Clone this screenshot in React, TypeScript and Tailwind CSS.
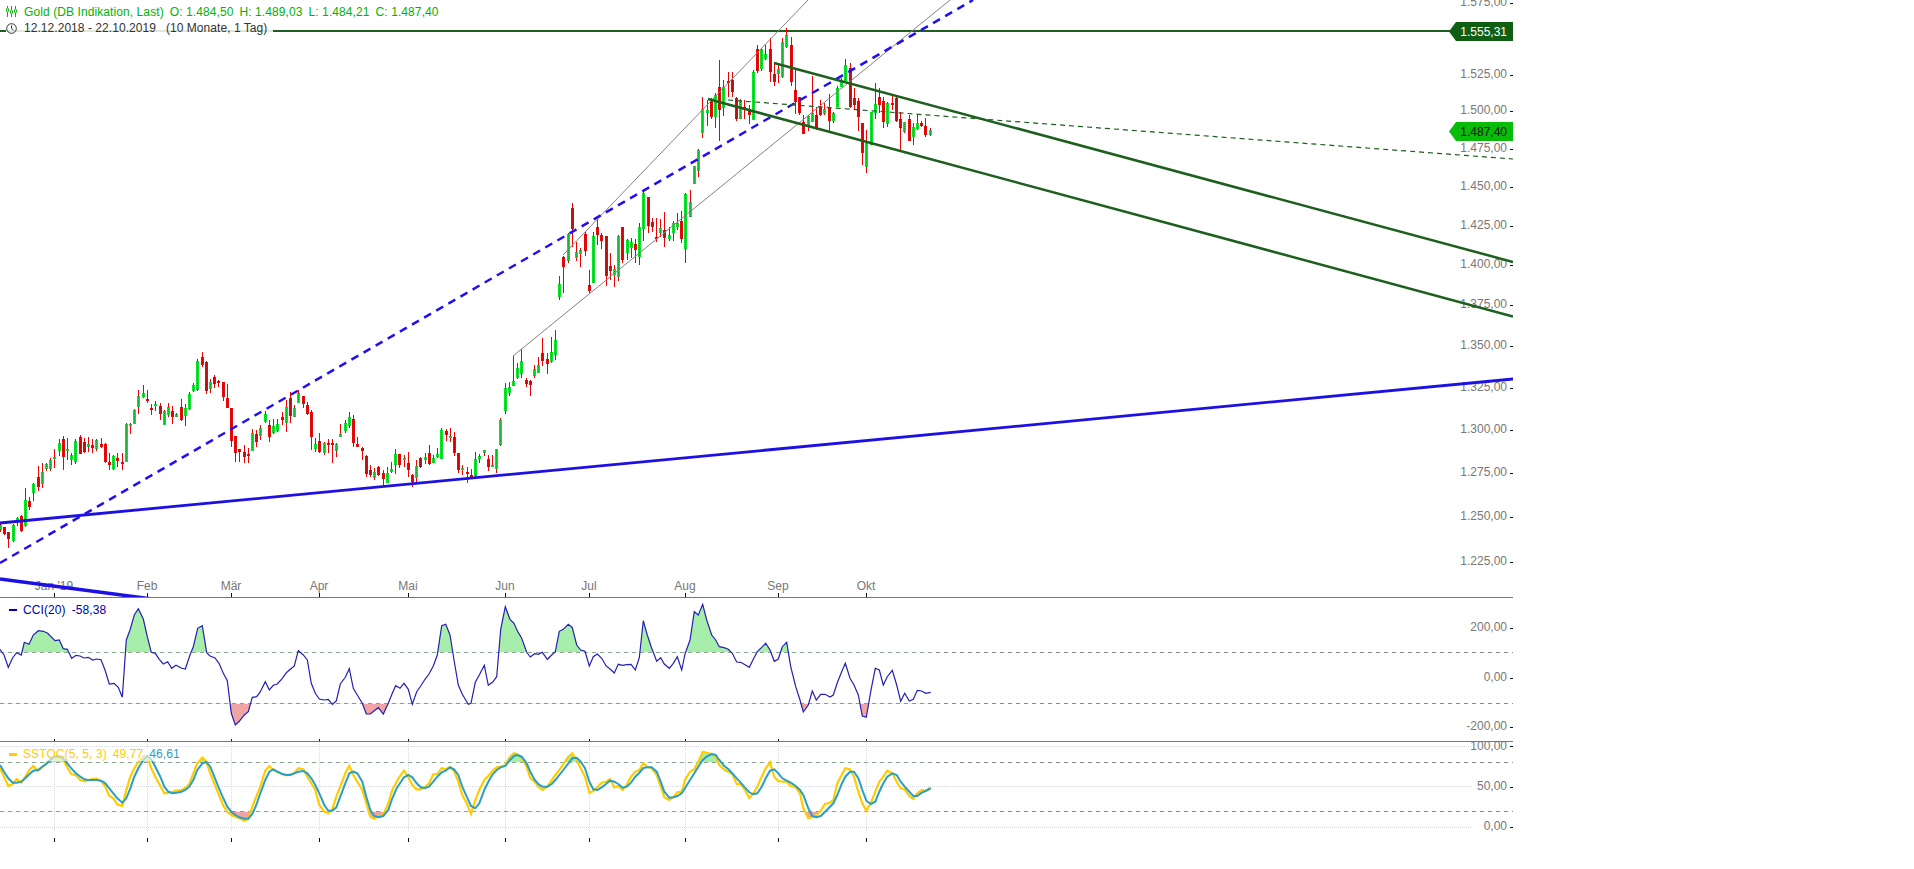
type Pt = number[];
// [x, wickTop, wickBottom, bodyTop, bodyBottom, green]
type Candle = [number, number, number, number, number, number];

const AXIS_END = 1513;

const candlesA: Candle[] = [
  [1,545,575,555,570,1],[13,560,585,562,582,0],[25,575,623,577,597,0],[38,553,606,556,603,1],[50,532,558,535,545,1],
  [64,525,575,527,572,0],[76,445,560,481,558,1],[88,470,510,484,502,0],[100,430,483,432,458,1],[114,378,452,412,442,0],
  [127,370,445,397,431,1],[139,368,392,371,388,1],[151,355,392,361,386,1],[163,328,385,351,356,1],[177,297,348,310,332,1],
  [190,288,390,298,350,0],[202,295,360,327,329,1],[214,338,375,346,359,1],[226,298,372,304,365,1],[241,285,343,292,341,0],
  [253,293,338,307,335,0],[265,292,335,313,320,1],[277,297,338,316,325,0],[289,297,332,301,326,1],[304,293,325,312,320,0],
  [316,310,370,312,367,0],[328,338,390,366,374,0],[340,345,390,349,388,1],[352,338,380,355,362,0],[367,340,390,366,368,0],
  [379,250,367,252,365,1],[391,250,282,252,257,1],[403,207,252,210,252,1],[415,150,222,169,200,1],[430,135,175,160,172,1],
  [442,150,188,177,179,0],[454,193,225,205,209,0],[466,183,212,192,197,1],[481,188,240,198,221,0],[493,210,255,213,254,1],
  [505,190,232,202,225,1],[517,198,252,213,230,0],[529,220,232,221,230,1],[544,178,243,202,240,0],[556,192,258,205,227,1],
  [568,155,210,163,207,1],[580,130,155,136,152,1],[592,58,152,64,150,1],[607,36,80,52,76,0],[619,63,162,66,152,0],
  [631,118,158,127,147,1],[643,105,143,112,131,0],[655,120,140,124,126,0],[670,125,183,127,171,0],[682,132,205,175,203,0],
  [694,203,322,203,303,0],[706,288,365,289,338,0],[718,328,365,328,335,0],[733,315,368,337,350,0],[745,325,368,343,347,0],
  [757,268,333,280,332,1],[769,270,320,283,305,0],[781,255,300,265,287,1],[796,212,250,223,245,1],[808,240,305,255,290,0],
  [820,237,282,259,280,1],[832,237,275,253,272,1],[847,215,255,232,240,0],[859,180,275,202,248,1],[871,155,250,174,228,0],
  [883,195,232,205,230,1],[895,150,190,160,190,1],[910,168,205,169,192,0],[922,185,225,196,221,0],[934,210,330,216,290,0],
  [946,295,335,313,328,1],[958,280,338,304,336,0],[973,305,345,310,339,1],[985,298,340,309,316,0],[997,298,368,309,311,0],
  [1009,310,350,313,334,1],[1021,252,290,283,290,1],[1036,240,280,250,274,1],[1048,215,265,230,258,1],
];

const candlesB: Candle[] = [
  [10,225,322,238,310,0],[22,292,322,313,320,0],[37,320,360,324,332,0],[49,345,410,347,401,0],[61,375,410,391,404,0],
  [73,385,420,395,413,1],[85,377,408,382,404,0],[100,390,440,400,416,0],[112,382,430,400,428,1],[124,365,400,388,395,1],
  [136,327,403,343,376,1],[148,342,385,343,376,0],[163,345,380,354,359,1],[175,335,410,370,391,0],[187,402,442,404,425,0],
  [199,360,430,379,415,1],[211,352,385,355,382,0],[226,340,372,352,360,1],[238,316,375,340,371,0],[250,345,370,355,368,1],
  [262,323,355,343,352,1],[274,265,358,270,356,1],[289,268,303,272,286,0],[301,265,305,288,292,1],[313,275,348,291,340,0],
  [325,338,398,340,389,0],[337,375,405,385,391,1],[352,380,428,397,403,0],[364,388,415,405,411,0],[376,337,410,358,408,1],
  [388,343,368,348,356,1],[403,330,348,331,339,1],[415,345,392,358,380,0],[427,345,378,376,378,1],[439,327,398,328,386,1],
  [451,235,317,240,316,1],[466,128,222,145,213,1],[478,125,167,142,159,1],[490,48,137,124,137,1],[502,68,118,83,113,1],
  [514,28,115,64,103,1],[529,115,140,120,131,0],[541,120,167,123,134,0],[553,75,115,87,107,1],[565,50,100,76,98,1],
  [577,-5,78,40,62,0],[592,40,102,57,71,0],[604,-10,70,37,65,1],[616,-30,60,0,46,1],
];

const candlesC: Candle[] = [
  [58,288,360,312,350,1],[70,228,340,232,260,0],[85,160,248,163,243,1],[97,70,200,84,148,0],[109,185,242,217,233,1],
  [121,205,262,210,222,1],[136,155,228,163,212,0],[148,270,340,316,332,0],[160,155,310,169,310,1],[172,118,195,142,166,0],
  [184,160,208,165,182,0],[199,168,318,169,288,0],[211,220,300,259,272,0],[223,255,320,268,286,1],[235,165,303,167,290,1],
  [247,140,250,142,239,0],[262,178,240,181,218,1],[274,175,235,187,203,1],[286,178,248,193,209,0],[298,130,255,140,232,1],
  [310,35,182,40,148,1],[325,50,158,52,137,0],[337,115,155,126,140,0],[349,115,185,171,177,0],[361,118,170,145,158,1],
  [373,97,200,151,173,0],[388,140,183,166,178,1],[400,122,183,129,158,1],[412,98,150,129,140,1],[424,93,190,124,178,0],
  [436,40,250,43,208,1],[451,30,112,65,110,1],
];

const candlesD: Candle[] = [
  [133,497,553,498,552,1],[145,447,530,451,512,1],[157,290,415,328,398,1],[172,300,378,330,338,1],[184,293,358,300,350,0],
  [196,280,385,286,350,1],[208,180,422,262,330,0],[220,240,348,262,325,1],[235,217,290,243,246,0],[247,215,290,240,276,0],
  [259,292,362,295,356,0],[271,298,358,300,356,1],[283,300,358,322,328,0],[298,315,372,328,345,0],[310,210,360,217,360,1],
  [322,135,220,147,212,0],[334,145,212,148,208,1],[346,135,180,162,176,1],[361,115,245,147,215,0],[373,190,258,222,245,0],
  [385,190,248,208,221,1],[397,115,235,126,232,1],[409,85,145,104,142,1],[424,112,258,135,245,0],[436,205,342,270,306,0],
  [448,290,345,292,340,0],[460,345,402,365,401,0],[475,345,392,347,378,1],[487,228,362,340,365,1],[499,322,390,345,385,0],
  [511,300,348,320,344,0],[523,310,345,328,342,1],[538,282,395,322,362,0],[550,335,370,340,362,1],[562,258,320,263,320,1],
  [574,235,262,245,262,1],[586,178,250,196,243,1],[601,190,325,205,320,0],[613,265,328,295,315,0],[625,295,392,304,350,0],
  [637,370,495,370,460,0],[649,390,518,430,502,1],[664,335,432,337,435,1],[676,250,358,313,340,1],[688,265,340,291,314,0],
  [700,290,385,303,366,0],[712,305,380,310,373,1],[727,288,330,310,312,0],[739,290,365,293,362,0],[751,335,450,356,385,0],
  [763,365,398,367,397,1],[778,345,422,358,422,0],[790,370,435,380,410,1],[802,345,390,370,388,1],[814,363,382,370,379,0],
  [826,355,412,379,406,0],[841,385,408,390,406,1],
];

const toCandles = (rows: Candle[], ox: number, oy: number): Candle[] =>
  rows.map(([x, wt, wb, bt, bb, g]) => [
    Math.round(ox + x / 3),
    Math.round(oy + wt / 3),
    Math.round(oy + wb / 3),
    Math.round(oy + bt / 3),
    Math.round(oy + bb / 3),
    g,
  ]);

const candles = [
  ...toCandles(candlesA, 0, 340),
  ...toCandles(candlesB, 350, 340),
  ...toCandles(candlesC, 540, 180),
  ...toCandles(candlesD, 650, 0),
];

const cciA: Pt[] = [[0,268],[12,285],[25,322],[38,293],[50,278],[64,285],[73,247],[87,253],[100,225],[115,212],[130,214],[143,220],[165,242],[178,240],[190,266],[202,268],[215,295],[228,286],[240,288],[252,294],[265,292],[278,300],[290,297],[303,299],[315,330],[328,372],[342,370],[355,382],[367,412],[379,240],[390,210],[403,165],[415,146],[430,177],[442,230],[454,277],[466,280],[478,298],[490,312],[503,305],[515,325],[528,316],[545,325],[556,327],[570,285],[580,260],[593,205],[607,197],[620,278],[630,288],[645,294],[657,310],[670,340],[682,362],[694,460],[706,495],[718,484],[733,465],[745,455],[757,412],[770,410],[781,395],[796,365],[808,390],[820,376],[832,372],[847,355],[859,338],[871,328],[883,318],[895,272],[910,285],[922,300],[934,370],[946,400],[958,417],[973,420],[985,418],[997,433],[1009,423],[1021,372],[1036,352],[1048,326],[1060,385],[1072,405],[1087,430],[1099,462],[1111,462],[1123,452],[1135,443],[1150,462],[1165,430],[1177,400],[1187,377],[1200,385]];
const cciB: Pt[] = [[0,382],[12,370],[25,388],[37,433],[50,395],[62,378],[75,358],[87,342],[100,318],[112,285],[125,197],[137,193],[150,225],[162,300],[175,375],[187,403],[205,433],[213,430],[226,367],[238,345],[253,316],[265,376],[278,366],[290,350],[302,208],[316,140],[330,178],[342,190],[352,212],[365,235],[380,277],[391,291],[404,281],[415,283],[427,277],[442,298],[455,285],[466,275],[478,214],[490,208],[505,193],[517,203],[530,255],[542,270],[555,274],[568,318],[580,290],[592,282],[605,295],[618,317],[630,327],[643,339],[655,313],[668,316],[680,314],[693,313],[706,330],[718,293],[730,182],[742,225],[755,265],[770,304],[782,293],[793,312],[808,325],[820,310],[832,290],[845,330],[855,282],[870,240],[883,155],[895,165],[908,133],[920,180],[935,225],[947,240],[958,260],[972,263],[985,268],[997,280],[1010,306],[1022,307],[1035,314],[1048,322],[1060,298],[1072,275],[1085,262],[1097,250],[1110,270],[1123,304],[1135,297],[1147,260],[1160,247],[1172,320],[1187,380],[1200,420]];
const cciC: Pt[] = [[0,420],[10,456],[25,435],[37,393],[49,420],[62,403],[75,403],[90,411],[100,405],[112,368],[125,335],[136,310],[150,355],[162,375],[175,405],[187,468],[199,472],[212,395],[226,325],[238,330],[250,375],[262,350],[277,331],[290,375],[302,424],[314,400],[328,423],[340,418],[352,391],[365,393],[377,400],[392,397]];

const yelA: Pt[] = [[0,625],[12,650],[25,678],[38,672],[50,657],[64,668],[76,650],[88,630],[100,618],[114,632],[127,622],[139,610],[151,600],[163,592],[177,592],[190,600],[202,622],[214,642],[226,645],[241,660],[253,664],[265,660],[277,657],[289,656],[304,664],[316,680],[328,707],[340,715],[352,733],[367,738],[379,690],[391,650],[403,625],[415,606],[430,588],[442,590],[454,625],[466,650],[481,678],[493,700],[505,698],[517,695],[529,692],[544,690],[556,684],[568,672],[580,640],[592,610],[607,593],[619,605],[631,640],[643,670],[655,700],[670,737],[682,755],[694,765],[706,770],[718,775],[733,782],[745,776],[757,740],[769,710],[781,680],[796,632],[808,618],[820,630],[832,635],[847,642],[859,646],[871,643],[883,640],[895,625],[910,628],[922,650],[934,670],[946,690],[958,735],[973,755],[985,760],[997,748],[1009,710],[1021,680],[1036,640],[1048,617],[1060,645],[1072,665],[1087,690],[1099,730],[1111,770],[1123,776],[1135,768],[1150,765],[1165,730],[1177,690],[1190,665],[1200,648]];
const yelB: Pt[] = [[0,650],[12,632],[25,650],[37,675],[50,688],[62,688],[75,682],[87,670],[100,643],[112,642],[125,625],[137,627],[150,622],[162,632],[175,665],[187,705],[200,730],[213,762],[226,720],[238,690],[253,660],[265,648],[278,632],[290,622],[302,620],[316,615],[330,590],[342,580],[352,582],[365,595],[380,620],[391,655],[404,665],[415,680],[427,690],[442,680],[455,660],[466,645],[478,630],[490,612],[505,590],[517,580],[530,600],[542,625],[555,650],[568,698],[580,693],[592,682],[605,668],[618,665],[630,657],[643,682],[655,678],[668,690],[680,675],[693,650],[706,635],[718,630],[730,610],[742,620],[755,625],[770,645],[782,680],[793,712],[808,720],[820,712],[832,697],[845,695],[855,660],[870,635],[883,628],[895,605],[908,575],[920,578],[935,582],[947,590],[958,615],[972,628],[985,635],[997,643],[1010,672],[1022,672],[1035,690],[1048,714],[1060,700],[1072,680],[1085,650],[1097,625],[1110,607],[1123,650],[1135,663],[1147,665],[1160,665],[1172,678],[1187,682],[1200,700]];
const yelC: Pt[] = [[0,710],[10,745],[25,775],[37,772],[49,765],[62,752],[75,732],[90,728],[100,720],[112,670],[125,645],[136,625],[150,628],[162,650],[175,695],[187,730],[199,752],[212,730],[226,695],[238,665],[250,650],[262,632],[277,640],[290,665],[302,685],[314,688],[328,708],[340,717],[352,700],[365,690],[377,693],[392,682]];

const bluA: Pt[] = [[0,615],[12,635],[25,655],[38,668],[50,668],[64,665],[76,655],[88,643],[100,632],[114,630],[127,620],[139,612],[151,600],[163,590],[177,588],[190,595],[202,610],[214,625],[226,638],[241,650],[253,658],[265,660],[277,660],[289,660],[304,662],[316,670],[328,685],[340,700],[352,715],[367,728],[379,715],[391,685],[403,650],[415,625],[430,600],[442,588],[454,598],[466,620],[481,650],[493,680],[505,695],[517,700],[529,698],[544,695],[556,690],[568,680],[580,660],[592,630],[607,610],[619,606],[631,620],[643,650],[655,680],[670,715],[682,740],[694,755],[706,765],[718,772],[733,776],[745,776],[757,762],[769,735],[781,700],[796,660],[808,635],[820,628],[832,635],[847,642],[859,645],[871,645],[883,640],[895,635],[910,633],[922,640],[934,655],[946,675],[958,700],[973,735],[985,752],[997,752],[1009,742],[1021,710],[1036,670],[1048,640],[1060,635],[1072,640],[1087,665],[1099,710],[1111,750],[1123,768],[1135,772],[1150,768],[1165,750],[1177,715],[1190,685],[1200,670]];
const bluB: Pt[] = [[0,672],[12,652],[25,645],[37,652],[50,670],[62,682],[75,684],[87,680],[100,665],[112,650],[125,637],[137,632],[150,622],[162,628],[175,645],[187,680],[200,710],[213,738],[226,745],[238,730],[253,690],[265,665],[278,643],[290,630],[302,622],[316,618],[330,600],[342,588],[352,585],[365,590],[380,610],[391,635],[404,660],[415,672],[427,680],[442,680],[455,672],[466,660],[478,645],[490,630],[505,610],[517,595],[530,593],[542,605],[555,625],[568,665],[580,688],[592,690],[605,682],[618,672],[630,662],[643,665],[655,672],[668,683],[680,680],[693,668],[706,650],[718,638],[730,624],[742,622],[755,622],[770,635],[782,665],[793,695],[808,713],[820,712],[832,708],[845,700],[855,685],[870,660],[883,640],[895,620],[908,600],[920,590],[935,582],[947,585],[958,600],[972,617],[985,627],[997,640],[1010,655],[1022,668],[1035,683],[1048,697],[1060,703],[1072,700],[1085,680],[1097,655],[1110,632],[1123,628],[1135,640],[1147,655],[1160,662],[1172,668],[1187,678],[1200,690]];
const bluC: Pt[] = [[0,685],[10,705],[25,745],[37,768],[49,772],[62,768],[75,755],[90,740],[100,730],[112,705],[125,672],[136,650],[150,635],[162,635],[175,655],[187,690],[199,722],[212,732],[226,725],[238,695],[250,670],[262,650],[277,640],[290,645],[302,665],[314,680],[328,695],[340,708],[352,708],[365,698],[377,693],[392,685]];

// crops are 3x, each series comes in three pieces starting at x = 0, 400 and 800
const toLine = (a: Pt[], b: Pt[], c: Pt[]) =>
  [
    ...a.map((p) => [p[0] / 3, 560 + p[1] / 3]),
    ...b.slice(1).map((p) => [400 + p[0] / 3, 560 + p[1] / 3]),
    ...c.slice(1).map((p) => [800 + p[0] / 3, 560 + p[1] / 3]),
  ];

const str = (line: Pt[]) => line.map((p) => `${p[0].toFixed(1)},${p[1].toFixed(1)}`).join(" ");
const area = (line: Pt[], y: number) => `0,${y} ${str(line)} ${line[line.length - 1][0]},${y}`;

const cci = toLine(cciA, cciB, cciC);
const yellow = toLine(yelA, yelB, yelC);
const blue = toLine(bluA, bluB, bluC);

const months = [
  { x: 54, name: "Jan '19" },
  { x: 147, name: "Feb" },
  { x: 231, name: "Mär" },
  { x: 319, name: "Apr" },
  { x: 408, name: "Mai" },
  { x: 505, name: "Jun" },
  { x: 589, name: "Jul" },
  { x: 685, name: "Aug" },
  { x: 778, name: "Sep" },
  { x: 866, name: "Okt" },
];

const priceTicks = [
  { y: 3, label: "1.575,00" },
  { y: 75, label: "1.525,00" },
  { y: 111, label: "1.500,00" },
  { y: 149, label: "1.475,00" },
  { y: 187, label: "1.450,00" },
  { y: 226, label: "1.425,00" },
  { y: 265, label: "1.400,00" },
  { y: 305, label: "1.375,00" },
  { y: 346, label: "1.350,00" },
  { y: 388, label: "1.325,00" },
  { y: 430, label: "1.300,00" },
  { y: 473, label: "1.275,00" },
  { y: 517, label: "1.250,00" },
  { y: 562, label: "1.225,00" },
];

function AxisTick({ y, label, tick }: { y: number; label: string; tick?: number }) {
  return (
    <g>
      <text x={1507} y={y + 3} textAnchor="end" fontSize={12} fill="#777">
        {label}
      </text>
      <rect x={1510} y={tick ?? y} width={3} height={1} fill="#111" />
    </g>
  );
}

function PriceTag({ y, fill, text, label }: { y: number; fill: string; text: string; label: string }) {
  return (
    <g>
      <polygon points={`1449,${y + 9.5} 1456,${y} 1513,${y} 1513,${y + 19} 1456,${y + 19}`} fill={fill} />
      <text x={1507} y={y + 14} textAnchor="end" fontSize={12} fill={text}>
        {label}
      </text>
    </g>
  );
}

function CandleStick({ c }: { c: Candle }) {
  const [x, wt, wb, bt, bb, g] = c;
  const h = Math.max(bb - bt, 2);
  return (
    <g>
      <rect x={x} y={wt} width={1} height={wb - wt} fill="#f00000" />
      <rect x={x - 1} y={bt} width={3} height={h} fill={g ? "#0ce42c" : "#e80a0a"} />
      <line
        x1={x + 0.5}
        x2={x + 0.5}
        y1={bt}
        y2={bt + h}
        stroke={g ? "#0a9e22" : "#a80808"}
        strokeDasharray="1 1"
      />
    </g>
  );
}

function GoldIcon() {
  return (
    <svg width="12" height="11" viewBox="0 0 12 11" fill="none" stroke="#00b400" strokeWidth="1">
      <path d="M1.5 0v2M1.5 6v5M5.5 0v4M5.5 8v3M9.5 0v3M9.5 7v4" />
      <ellipse cx="1.5" cy="4" rx="1" ry="2" />
      <ellipse cx="5.5" cy="6" rx="1" ry="2" />
      <ellipse cx="9.5" cy="5" rx="1" ry="2" />
    </svg>
  );
}

function ClockIcon() {
  return (
    <svg width="11" height="11" viewBox="0 0 11 11" fill="none" stroke="#333" strokeWidth="1">
      <circle cx="5.5" cy="5.5" r="4.8" />
      <path d="M5.5 2.5v3l2 1.5" />
    </svg>
  );
}

function MainPanel() {
  return (
    <div className="relative h-[598px] border-b border-[#777]">
      <svg className="block h-full w-full" viewBox={`0 0 ${AXIS_END} 597`}>
        <line x1="0" y1="31" x2="1450" y2="31" stroke="#1d5f1d" strokeWidth="2" />
        {priceTicks.map((t) => (
          <AxisTick key={t.label} y={t.y} label={t.label} />
        ))}
        {months.map((m) => (
          <g key={m.name}>
            <text x={m.x} y={590} textAnchor="middle" fontSize={12} fill="#777">
              {m.name}
            </text>
            <rect x={m.x} y={593} width={1} height={4} fill="#111" />
          </g>
        ))}
        <g shapeRendering="crispEdges">
          {candles.map((c, i) => (
            <CandleStick key={i} c={c} />
          ))}
        </g>
        <line x1="513" y1="356" x2="950" y2="0" stroke="#858080" strokeWidth="1" />
        <line x1="563" y1="255" x2="808" y2="0" stroke="#858080" strokeWidth="1" />
        <line x1="0" y1="523" x2={AXIS_END} y2="379" stroke="#1c10e4" strokeWidth="2.8" />
        <line x1="0" y1="563" x2="973" y2="0" stroke="#2010f0" strokeWidth="2.5" strokeDasharray="8 6" />
        <line x1="0" y1="579" x2="152" y2="599" stroke="#1c10e4" strokeWidth="3.5" />
        <line x1="728" y1="100" x2={AXIS_END} y2="159" stroke="#1d5f1d" strokeWidth="1.2" strokeDasharray="5 4" />
        <line x1="774" y1="63" x2={AXIS_END} y2="262" stroke="#1d5f1d" strokeWidth="2.5" />
        <line x1="708" y1="99" x2={AXIS_END} y2="316.5" stroke="#1d5f1d" strokeWidth="2.5" />
        <PriceTag y={22} fill="#0f5e12" text="#fff" label="1.555,31" />
        <PriceTag y={122} fill="#0abc0a" text="#111" label="1.487,40" />
      </svg>

      <div className="absolute top-[4px] left-[6px] flex h-[15px] items-center gap-[6px] text-[12px] tracking-[0.09px] text-[#00b400]">
        <GoldIcon />
        <span>Gold (DB Indikation, Last)</span>
        <span>O: 1.484,50</span>
        <span>H: 1.489,03</span>
        <span>L: 1.484,21</span>
        <span>C: 1.487,40</span>
      </div>
      <div className="absolute top-[21px] left-[6px] flex h-[14px] w-[267px] items-center gap-[7px] bg-white/85 text-[12px] tracking-[0.05px] text-[#333]">
        <ClockIcon />
        <span className="mr-[3px]">12.12.2018 - 22.10.2019</span>
        <span>(10 Monate, 1 Tag)</span>
      </div>
    </div>
  );
}

function CciPanel() {
  return (
    <div className="relative h-[144px] border-b border-[#777]">
      <svg className="block h-full w-full" viewBox={`0 598 ${AXIS_END} 143`}>
        <defs>
          <clipPath id="cci-up">
            <rect x="0" y="598" width={AXIS_END} height="54.5" />
          </clipPath>
          <clipPath id="cci-down">
            <rect x="0" y="703.5" width={AXIS_END} height="38" />
          </clipPath>
        </defs>
        <line x1="0" y1="652.5" x2={AXIS_END} y2="652.5" stroke="#888" strokeDasharray="4 4" />
        <line x1="0" y1="703.5" x2={AXIS_END} y2="703.5" stroke="#888" strokeDasharray="4 4" />
        <polygon points={area(cci, 652.5)} fill="#a6eeaa" clipPath="url(#cci-up)" />
        <polygon points={area(cci, 703.5)} fill="#f0a4a4" clipPath="url(#cci-down)" />
        <polyline points={str(cci)} fill="none" stroke="#2420b4" strokeWidth="1.2" />
        <AxisTick y={628} label="200,00" />
        <AxisTick y={678} label="0,00" />
        <AxisTick y={727} label="-200,00" />
        {months.map((m) => (
          <rect key={m.name} x={m.x} y={739} width={1} height={2} fill="#111" />
        ))}
      </svg>
      <div className="absolute top-[5px] left-[9px] flex items-center gap-[6px] text-[12px] leading-[14px] tracking-[0.09px] text-[#0000aa]">
        <span className="h-[2px] w-[8px] bg-[#0000aa]" />
        <span>CCI(20)</span>
        <span>-58,38</span>
      </div>
    </div>
  );
}

function StochPanel() {
  return (
    <div className="relative h-[110px]">
      <svg className="block h-full w-full" viewBox={`0 742 ${AXIS_END} 110`}>
        <defs>
          <clipPath id="st-up">
            <rect x="0" y="742" width={AXIS_END} height="20.5" />
          </clipPath>
          <clipPath id="st-down">
            <rect x="0" y="811.5" width={AXIS_END} height="30" />
          </clipPath>
        </defs>
        {[746.5, 786.5, 827.5].map((y) => (
          <line key={y} x1="0" y1={y} x2="1472" y2={y} stroke="#d4d8dc" strokeDasharray="1 1" />
        ))}
        {months.map((m) => (
          <g key={m.name}>
            <line x1={m.x + 0.5} y1="742" x2={m.x + 0.5} y2="832" stroke="#d8dade" strokeDasharray="1 1" />
            <rect x={m.x} y={838} width={1} height={4} fill="#111" />
          </g>
        ))}
        <line x1="0" y1="762.5" x2={AXIS_END} y2="762.5" stroke="#888" strokeDasharray="4 4" />
        <line x1="0" y1="811.5" x2={AXIS_END} y2="811.5" stroke="#888" strokeDasharray="4 4" />
        <polygon points={area(yellow, 762.5)} fill="#a6eeaa" clipPath="url(#st-up)" />
        <polygon points={area(yellow, 811.5)} fill="#f0a4a4" clipPath="url(#st-down)" />
        <polyline points={str(yellow)} fill="none" stroke="#ffcc00" strokeWidth="2.2" />
        <polyline points={str(blue)} fill="none" stroke="#2a9fc2" strokeWidth="2" />
        <AxisTick y={747} tick={746} label="100,00" />
        <AxisTick y={787} label="50,00" />
        <AxisTick y={827} label="0,00" />
      </svg>
      <div className="absolute top-[5px] left-[9px] flex items-center gap-[6px] bg-white/60 text-[12px] leading-[14px] tracking-[0.09px] text-[#ffcc00]">
        <span className="h-[3px] w-[8px] bg-[#ffcc00]" />
        <span>SSTOC(5, 5, 3)</span>
        <span>49,77</span>
        <span className="text-[#2a9fc2]">46,61</span>
      </div>
    </div>
  );
}

export default function App() {
  return (
    <div className="flex h-[869px] w-[1914px] overflow-hidden bg-white font-['Liberation_Sans',Arial,sans-serif]">
      <div className="w-[1513px] shrink-0">
        <MainPanel />
        <CciPanel />
        <StochPanel />
      </div>
    </div>
  );
}
